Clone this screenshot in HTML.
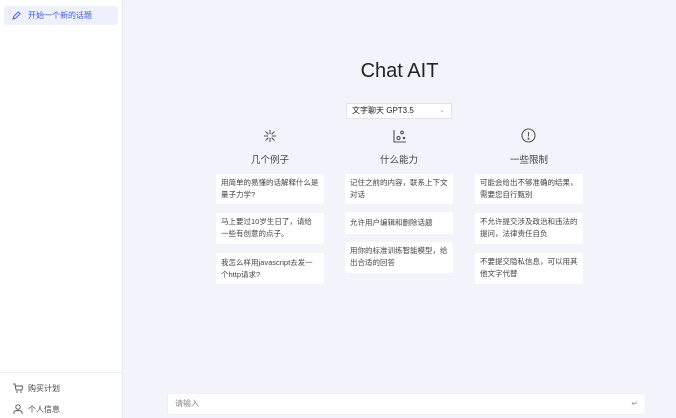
<!DOCTYPE html><html><head><meta charset="utf-8"><style>
*{margin:0;padding:0;box-sizing:border-box}
body{width:676px;height:418px;overflow:hidden;font-family:"Liberation Sans","Noto Sans CJK SC",sans-serif;background:#f3f4fb;position:relative;color:#333}
.side{position:absolute;left:0;top:0;width:123px;height:418px;background:#fff;border-right:1px solid #e8e9ee}
.new{position:absolute;left:4px;top:6px;width:114px;height:19px;background:#eef0fb;border-radius:3px;font-size:8px;color:#3a5bd9;line-height:19px;padding-left:24px}
.sep{position:absolute;left:0;top:372px;width:122px;border-top:1px solid #ececf0}
.bi{position:absolute;left:14px;font-size:8px;color:#444}
.a{position:absolute}
h1{position:absolute;left:123px;width:553px;text-align:center;top:60px;font-size:20px;font-weight:normal;color:#222}
.sel{position:absolute;left:346px;top:103px;width:106px;height:16px;background:#fff;border:1px solid #e3e4ea;font-size:8px;line-height:14px;padding-left:5px;color:#222}
.head{position:absolute;width:108px;text-align:center;font-size:9.5px;color:#444;top:152px}
.card{position:absolute;width:108px;background:#fff;border-radius:2px;font-size:7.5px;line-height:12px;color:#444;padding:3px 5px}
.inp{position:absolute;left:168px;top:394px;width:477px;height:20px;background:#fff;border-radius:2px;font-size:8px;color:#888;line-height:20px;padding-left:7px;box-shadow:0 0 2px rgba(0,0,0,.05)}
</style></head><body>
<div class="side">
<div class="new"><svg class="a" style="left:8px;top:5px" width="9" height="9" viewBox="0 0 10 10"><path d="M1 9l1-3 5-5 2 2-5 5z" fill="none" stroke="#3a5bd9" stroke-width="1"/></svg>开始一个新的话题</div>
<div class="sep"></div>
<svg class="a" style="left:13px;top:383px" width="10" height="10" viewBox="0 0 10 10"><path d="M0 1h2l1 6h6l1-4H2.5" fill="none" stroke="#555" stroke-width=".9"/><circle cx="4" cy="9" r=".8" fill="#555"/><circle cx="8" cy="9" r=".8" fill="#555"/></svg>
<div class="bi" style="left:28px;top:383px">购买计划</div>
<svg class="a" style="left:13px;top:404px" width="10" height="10" viewBox="0 0 10 10"><circle cx="5" cy="3" r="2.2" fill="none" stroke="#555" stroke-width=".9"/><path d="M1 10V8.5C1 7 3 6.5 5 6.5S9 7 9 8.5V10" fill="none" stroke="#555" stroke-width=".9"/></svg>
<div class="bi" style="left:28px;top:404px">个人信息</div>
</div>
<h1>Chat AIT</h1>
<div class="sel">文字聊天 GPT3.5<span style="position:absolute;right:6px;color:#aaa;font-size:7px">⌄</span></div>
<svg class="a" style="left:263px;top:129px" width="14" height="14" viewBox="0 0 14 14" stroke="#555" stroke-width="1.1" fill="none"><path d="M7 1v4M7 9v4M1 7h4M9 7h4M2.5 2.5l3 3M8.5 8.5l3 3M11.5 2.5l-3 3M5.5 8.5l-3 3"/></svg>
<svg class="a" style="left:393px;top:129px" width="14" height="14" viewBox="0 0 14 14" stroke="#555" stroke-width="1.1" fill="none"><path d="M1 1v12h12"/><circle cx="5.5" cy="9" r="1.6"/><circle cx="9" cy="3.5" r="1.3"/><circle cx="11" cy="9" r=".7" fill="#555"/></svg>
<svg class="a" style="left:521px;top:128px" width="15" height="15" viewBox="0 0 15 15" stroke="#555" stroke-width="1.1" fill="none"><circle cx="7.5" cy="7.5" r="6.5"/><path d="M7.5 4v4.5"/><circle cx="7.5" cy="10.7" r=".5" fill="#555"/></svg>
<div class="head" style="left:216px">几个例子</div>
<div class="head" style="left:345px">什么能力</div>
<div class="head" style="left:475px">一些限制</div>
<div class="card" style="left:216px;top:174px;height:30px">用简单的易懂的话解释什么是量子力学?</div>
<div class="card" style="left:216px;top:213px;height:31px">马上要过10岁生日了，请给一些有创意的点子。</div>
<div class="card" style="left:216px;top:253px;height:31px;padding-top:4px">我怎么样用javascript去发一个http请求?</div>
<div class="card" style="left:345px;top:174px;height:30px">记住之前的内容，联系上下文对话</div>
<div class="card" style="left:345px;top:212px;height:22px;padding-top:5px">允许用户编辑和删除话题</div>
<div class="card" style="left:345px;top:242px;height:31px">用你的标准训练智能模型，给出合适的回答</div>
<div class="card" style="left:475px;top:174px;height:30px">可能会给出不够准确的结果，需要您自行甄别</div>
<div class="card" style="left:475px;top:213px;height:31px">不允许提交涉及政治和违法的提问，法律责任自负</div>
<div class="card" style="left:475px;top:253px;height:31px">不要提交隐私信息，可以用其他文字代替</div>
<div class="inp">请输入<span style="position:absolute;right:7px;color:#999">↵</span></div>
</body></html>
